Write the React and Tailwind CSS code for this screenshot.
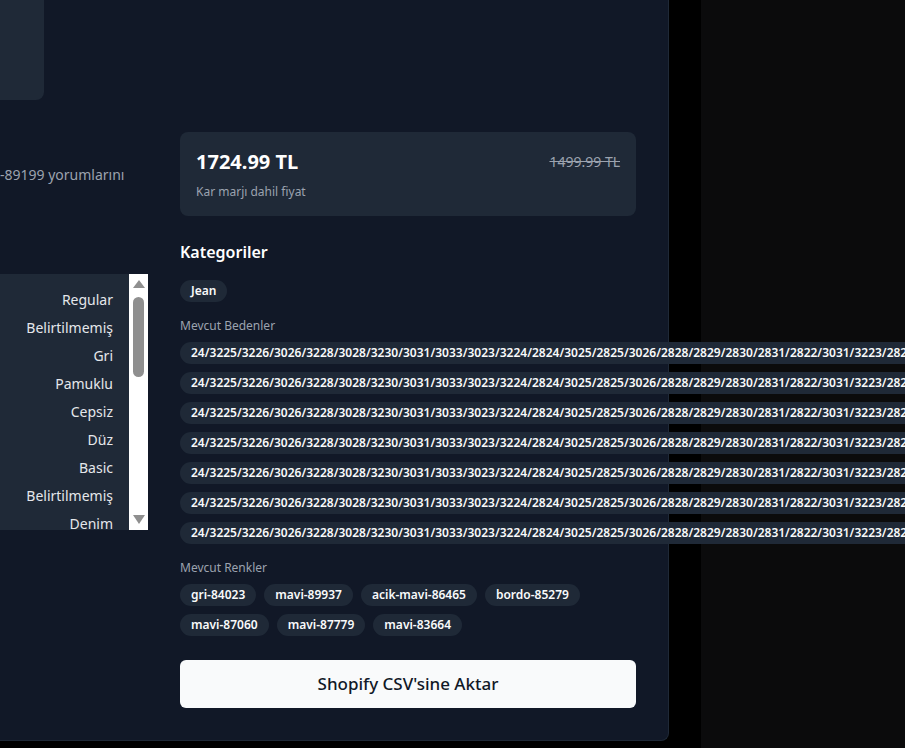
import React from "react";

const SIZE =
  "24/3225/3226/3026/3228/3028/3230/3031/3033/3023/3224/2824/3025/2825/3026/2828/2829/2830/2831/2822/3031/3223/2827/2826/3029/3227/2923/3224";

const LIST = [
  "Regular",
  "Belirtilmemiş",
  "Gri",
  "Pamuklu",
  "Cepsiz",
  "Düz",
  "Basic",
  "Belirtilmemiş",
  "Denim",
  "Normal",
];

const COLORS = [
  "gri-84023",
  "mavi-89937",
  "acik-mavi-86465",
  "bordo-85279",
  "mavi-87060",
  "mavi-87779",
  "mavi-83664",
];

function Chip({ children }) {
  return (
    <span className="inline-flex items-center whitespace-nowrap rounded-full border border-transparent bg-[#1f2937] px-2.5 py-0.5 text-xs font-semibold leading-4 text-[#f9fafb]">
      {children}
    </span>
  );
}

export default function App() {
  return (
    <div
      className="flex h-[748px] w-[905px] overflow-hidden bg-black"
      style={{ fontFamily: '"Noto Sans", "Open Sans", sans-serif' }}
    >
      <div className="relative z-10 flex h-[741px] w-[669px] shrink-0 gap-8 rounded-br-lg border-r border-b border-[#1f2937] bg-[#111827] pr-8 pb-8">
        {/* left column */}
        <div className="flex w-[148px] shrink-0 flex-col">
          <div className="h-[100px] w-[44px] rounded-br-lg bg-[#1f2937]" />
          <div className="mt-[65px] whitespace-nowrap text-sm leading-5 text-[#9ca3af]">
            -89199 yorumlarını
          </div>
          <div className="mt-[89px] flex h-[256px] overflow-hidden bg-[#1f2937]">
            <div className="flex-1 overflow-hidden pt-3 pr-4">
              {LIST.map((t, i) => (
                <div
                  key={i}
                  className="flex h-7 items-center justify-end text-sm text-[#e5e7eb]"
                >
                  {t}
                </div>
              ))}
            </div>
            <div className="flex w-[19px] shrink-0 flex-col items-center bg-white">
              <div className="mt-[6px] h-0 w-0 border-x-[6px] border-b-[8px] border-x-transparent border-b-[#8f8f8f]" />
              <div className="mt-[9px] h-[80px] w-[11px] rounded-full bg-[#8f8f8f]" />
              <div className="mt-auto mb-[6px] h-0 w-0 border-x-[6px] border-t-[9px] border-x-transparent border-t-[#8f8f8f]" />
            </div>
          </div>
        </div>

        {/* right column */}
        <div className="flex w-[456px] shrink-0 flex-col pt-[132px]">
          <div className="rounded-lg bg-[#1f2937] p-4">
            <div className="flex items-center justify-between">
              <span className="text-xl leading-7 font-bold text-white">1724.99 TL</span>
              <span className="text-sm text-[#9ca3af] line-through">1499.99 TL</span>
            </div>
            <div className="mt-2 text-xs leading-4 text-[#9ca3af]">Kar marjı dahil fiyat</div>
          </div>

          <h3 className="mt-6 text-base leading-6 font-semibold text-white">Kategoriler</h3>
          <div className="mt-4 flex flex-wrap gap-2">
            <Chip>Jean</Chip>
          </div>

          <div className="mt-4 text-xs leading-4 text-[#9ca3af]">Mevcut Bedenler</div>
          <div className="mt-2 flex flex-col items-start gap-2">
            {Array.from({ length: 7 }).map((_, i) => (
              <Chip key={i}>{SIZE}</Chip>
            ))}
          </div>

          <div className="mt-4 text-xs leading-4 text-[#9ca3af]">Mevcut Renkler</div>
          <div className="mt-2 flex flex-wrap gap-2">
            {COLORS.map((c) => (
              <Chip key={c}>{c}</Chip>
            ))}
          </div>

          <button className="mt-6 flex h-12 w-full items-center justify-center rounded-md bg-[#f9fafb] text-[17px] font-medium text-[#111827]">
            Shopify CSV'sine Aktar
          </button>
        </div>
      </div>
      <div className="w-8 shrink-0 bg-black" />
      <div className="h-full flex-1 bg-[#0b0b0c]" />
    </div>
  );
}
